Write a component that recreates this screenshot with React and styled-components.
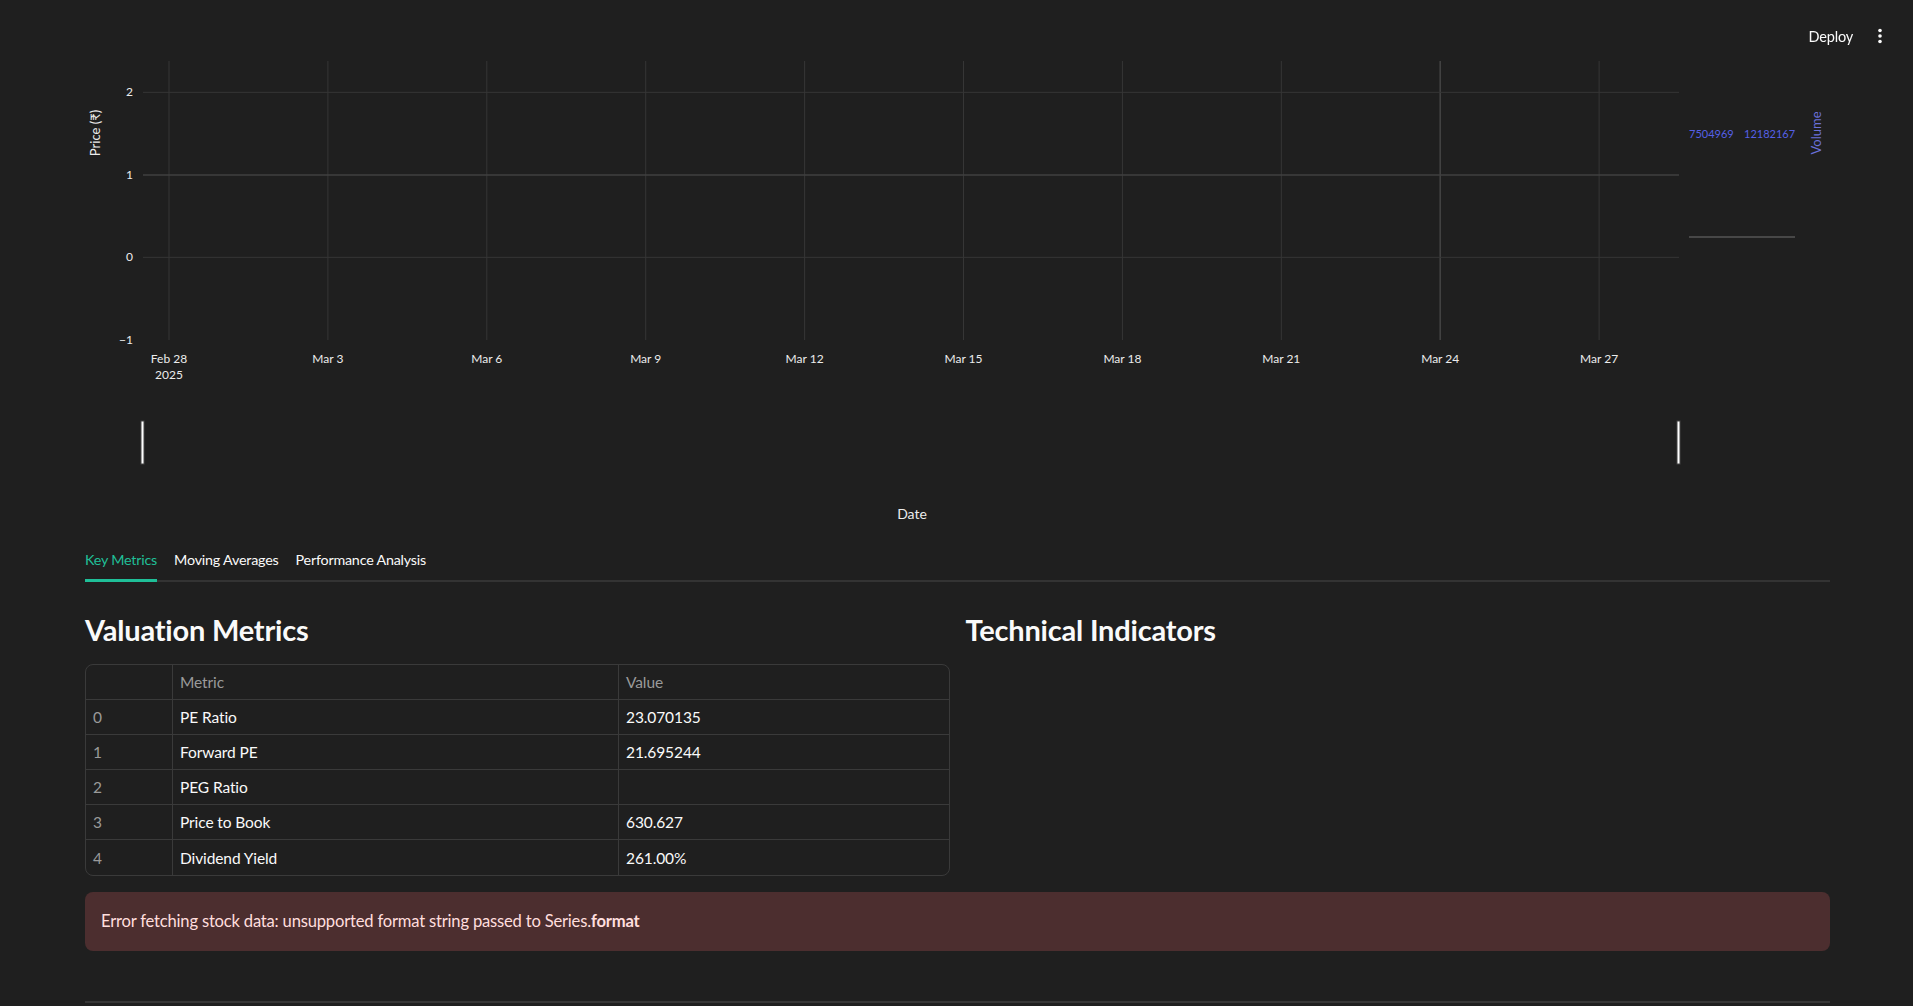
import React, { useState } from 'react';
import styled, { createGlobalStyle } from 'styled-components';

const bg = '#1f1f1f';
const text = '#fafafa';
const accent = '#1fbf98';
const line = '#3a3a3a';
const font = `Lato, "Source Sans Pro", "Noto Sans", sans-serif`;

const GlobalStyle = createGlobalStyle`
  html, body {
    margin: 0;
    padding: 0;
    background: ${bg};
    color: ${text};
    font-family: ${font};
  }
  * { box-sizing: border-box; }
`;

const Header = styled.header`
  position: fixed;
  top: 0;
  left: 0;
  right: 0;
  height: 72px;
  display: flex;
  align-items: center;
  justify-content: flex-end;
  gap: 9px;
  padding: 0 23px 0 0;
  z-index: 10;
`;

const DeployButton = styled.button`
  background: none;
  border: none;
  color: ${text};
  font-family: ${font};
  font-size: 14.5px;
  letter-spacing: -0.2px;
  padding: 4px 8px;
  cursor: pointer;
`;

const MenuButton = styled.button`
  background: none;
  border: none;
  padding: 0;
  width: 20px;
  height: 20px;
  display: flex;
  align-items: center;
  justify-content: center;
  color: ${text};
`;

const Main = styled.main`
  padding: 0 83px 0 85px;
`;

const ChartSvg = styled.svg`
  display: block;
  width: 100%;
  height: 536px;
  font-family: ${font};
`;

const TabList = styled.div`
  display: flex;
  gap: 17px;
  height: 46px;
  border-bottom: 2px solid #333333;
`;

const Tab = styled.button`
  background: none;
  border: none;
  padding: 0;
  margin-bottom: -2px;
  font-family: ${font};
  font-size: 14.3px;
  letter-spacing: -0.2px;
  color: ${p => (p.$active ? accent : text)};
  border-bottom: 3px solid ${p => (p.$active ? accent : 'transparent')};
  padding-top: 3px;
  cursor: pointer;
`;

const Panel = styled.section`
  padding-top: 16px;
`;

const Columns = styled.div`
  display: grid;
  grid-template-columns: 1fr 1fr;
  gap: 16px;
`;

const Heading = styled.h3`
  margin: 15px 0 17px;
  font-size: 29px;
  line-height: 34px;
  font-weight: 700;
  letter-spacing: -0.2px;
`;

const Table = styled.div`
  display: grid;
  grid-template-columns: 87px 446px 1fr;
  border: 1px solid ${line};
  border-radius: 8px;
  overflow: hidden;
  font-size: 15.5px;
`;

const Cell = styled.div`
  height: 35px;
  display: flex;
  align-items: center;
  padding: 0 7px;
  border-right: ${p => (p.$last ? 'none' : `1px solid ${line}`)};
  border-bottom: ${p => (p.$bottom ? 'none' : `1px solid ${line}`)};
  color: ${p => (p.$muted ? '#9a9a9a' : text)};
  letter-spacing: -0.1px;
`;

const ErrorBox = styled.div`
  margin-top: 16px;
  background: #4c2e2f;
  border-radius: 8px;
  padding: 17px 16px;
  color: #ffdede;
  font-size: 16.6px;
  line-height: 25px;
  letter-spacing: -0.2px;
`;

const Divider = styled.hr`
  margin: 50px 0 0;
  border: none;
  height: 2px;
  background: #363636;
`;

const dates = ['Feb 28', 'Mar 3', 'Mar 6', 'Mar 9', 'Mar 12', 'Mar 15', 'Mar 18', 'Mar 21', 'Mar 24', 'Mar 27'];
const yTicks = [
  { label: '2', y: 92.3 },
  { label: '1', y: 175 },
  { label: '0', y: 257.3 },
  { label: '\u22121', y: 340 },
];

const rows = [
  ['PE Ratio', '23.070135'],
  ['Forward PE', '21.695244'],
  ['PEG Ratio', ''],
  ['Price to Book', '630.627'],
  ['Dividend Yield', '261.00%'],
];

function PriceChart() {
  const x0 = 84;
  const step = 158.9;
  return (
    <ChartSvg viewBox="0 0 1745 536" preserveAspectRatio="none">
      {dates.map((d, i) => (
        <line
          key={d}
          x1={x0 + step * i}
          x2={x0 + step * i}
          y1={61}
          y2={340}
          stroke={d === 'Mar 24' ? '#444' : '#363636'}
          strokeWidth={d === 'Mar 24' ? 1.5 : 1}
        />
      ))}
      {yTicks.slice(0, 3).map(t => (
        <line
          key={t.label}
          x1={58}
          x2={1594}
          y1={t.y}
          y2={t.y}
          stroke={t.label === '1' ? '#404040' : '#363636'}
          strokeWidth={t.label === '1' ? 1.5 : 1}
        />
      ))}
      {yTicks.map(t => (
        <text key={t.label} x={48} y={t.y + 4} fontSize="12" fill="#ececec" textAnchor="end">
          {t.label}
        </text>
      ))}
      {dates.map((d, i) => (
        <text key={d} x={x0 + step * i} y={363} fontSize="12" fill="#ececec" textAnchor="middle">
          {d}
        </text>
      ))}
      <text x={x0} y={379} fontSize="12" fill="#ececec" textAnchor="middle">2025</text>
      <text x={15} y={133} fontSize="13" fill="#ececec" textAnchor="middle" transform="rotate(-90 15 133)">
        Price (₹)
      </text>

      <text x={1604} y={138} fontSize="11" fill="#5560e6">7504969</text>
      <text x={1659} y={138} fontSize="11" fill="#5560e6">12182167</text>
      <text x={1736} y={133} fontSize="13" fill="#6a70d8" textAnchor="middle" transform="rotate(-90 1736 133)">
        Volume
      </text>
      <line x1={1604} x2={1710} y1={237} y2={237} stroke="#474747" strokeWidth="2" />

      <rect x={56} y={421} width={3} height={43} fill="#ffffff" stroke="#444" strokeWidth="1" />
      <rect x={1592} y={421} width={3} height={43} fill="#ffffff" stroke="#444" strokeWidth="1" />

      <text x={827} y={519} fontSize="14" fill="#ececec" textAnchor="middle">Date</text>
    </ChartSvg>
  );
}

function MetricsTable() {
  return (
    <Table>
      <Cell />
      <Cell $muted>Metric</Cell>
      <Cell $muted $last>Value</Cell>
      {rows.map(([name, value], i) => {
        const bottom = i === rows.length - 1;
        return (
          <React.Fragment key={name}>
            <Cell $muted $bottom={bottom}>{i}</Cell>
            <Cell $bottom={bottom}>{name}</Cell>
            <Cell $last $bottom={bottom}>{value}</Cell>
          </React.Fragment>
        );
      })}
    </Table>
  );
}

export default function App() {
  const [tab, setTab] = useState('Key Metrics');
  const tabs = ['Key Metrics', 'Moving Averages', 'Performance Analysis'];

  return (
    <>
      <GlobalStyle />
      <Header>
        <DeployButton>Deploy</DeployButton>
        <MenuButton aria-label="menu">
          <svg width="6" height="16" viewBox="0 0 6 16">
            <circle cx="3" cy="2.5" r="1.8" fill="currentColor" />
            <circle cx="3" cy="8" r="1.8" fill="currentColor" />
            <circle cx="3" cy="13.5" r="1.8" fill="currentColor" />
          </svg>
        </MenuButton>
      </Header>
      <Main>
        <PriceChart />
        <TabList>
          {tabs.map(t => (
            <Tab key={t} $active={t === tab} onClick={() => setTab(t)}>
              {t}
            </Tab>
          ))}
        </TabList>
        <Panel>
          <Columns>
            <div>
              <Heading>Valuation Metrics</Heading>
              <MetricsTable />
            </div>
            <div>
              <Heading>Technical Indicators</Heading>
            </div>
          </Columns>
          <ErrorBox>
            Error fetching stock data: unsupported format string passed to Series.<b>format</b>
          </ErrorBox>
        </Panel>
        <Divider />
      </Main>
    </>
  );
}
